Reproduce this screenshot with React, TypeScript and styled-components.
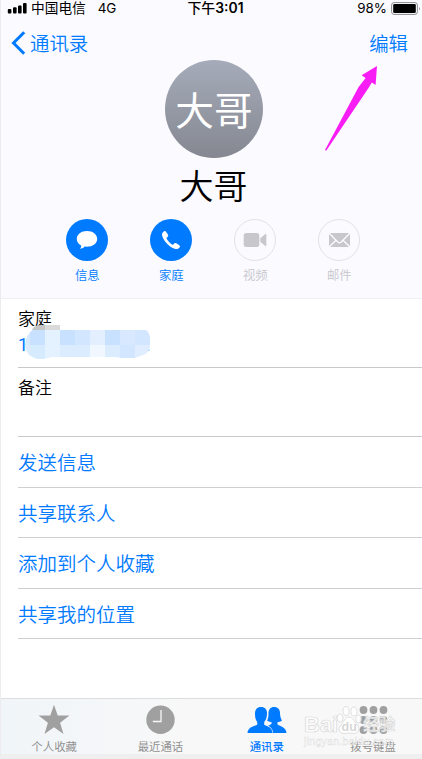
import React from 'react';
import styled, { createGlobalStyle } from 'styled-components';

const BLUE = '#007aff';

const GlobalStyle = createGlobalStyle`
  * { box-sizing: border-box; }
  body {
    margin: 0;
    background: #efeff0;
    font-family: "Liberation Sans", "Noto Sans CJK SC", sans-serif;
    color: #000;
    overflow: hidden;
  }
  svg { display: block; flex: none; }
`;

const Screen = styled.div`
  position: relative;
  width: 422px;
  height: 759px;
  border-left: 1px solid #ececee;
  border-bottom: 5px solid #efeff0;
  background: #fff;
  display: flex;
  flex-direction: column;
  overflow: hidden;
`;

const Header = styled.header`
  height: 299px;
  flex: none;
  background: #fafaff;
  border-bottom: 1px solid #f0f0f4;
  display: flex;
  flex-direction: column;
`;

const StatusBar = styled.div`
  display: grid;
  grid-template-columns: 1fr auto 1fr;
  align-items: center;
  height: 15px;
  padding: 0 1px 0 6px;
  font: 14px/16px Inter, "Noto Sans CJK SC", sans-serif;
  white-space: nowrap;
`;

const Carrier = styled.div`
  display: flex;
  align-items: center;
  font-size: 13.7px;
  gap: 4px;
`;

const Network = styled.span`
  margin-left: 8px;
  font-size: 13.5px;
  letter-spacing: -0.2px;
`;

const Clock = styled.div`
  font-weight: 600;
  font-size: 13.9px;
  margin-left: 3px;
  & > span { font-weight: 500; }
`;

const Power = styled.div`
  display: flex;
  align-items: center;
  justify-content: flex-end;
  gap: 4px;
  font-size: 13.4px;
`;

const NavBar = styled.nav`
  display: flex;
  align-items: center;
  justify-content: space-between;
  height: 44px;
  padding: 12px 14px 0 10px;
  color: ${BLUE};
  font: 350 19.4px/30px "Noto Sans CJK SC", sans-serif;
`;

const Back = styled.div`
  display: flex;
  align-items: center;
  gap: 4px;
`;

const Avatar = styled.div`
  width: 98px;
  height: 98px;
  margin: 1px 0 0 164px;
  border-radius: 50%;
  background: linear-gradient(#a5abb9, #858891);
  color: #fff;
  font: 400 38.7px/96px "Noto Sans CJK SC", sans-serif;
  text-align: center;
`;

const Name = styled.h1`
  margin: 4px 0 0 4px;
  height: 57px;
  text-align: center;
  font: 350 34px/46px "Noto Sans CJK SC", sans-serif;
`;

const Actions = styled.div`
  display: grid;
  grid-template-columns: repeat(4, 84px);
  margin-left: 44.3px;
`;

const Action = styled.div<{ $off?: boolean }>`
  display: flex;
  flex-direction: column;
  align-items: center;
  color: ${(p) => (p.$off ? '#c7c7cc' : BLUE)};
  font: 350 12.4px/18px "Noto Sans CJK SC", sans-serif;
  gap: 5px;
`;

const Disc = styled.div<{ $off?: boolean }>`
  width: 42px;
  height: 42px;
  border-radius: 50%;
  display: grid;
  place-items: center;
  background: ${(p) => (p.$off ? 'transparent' : BLUE)};
  border: ${(p) => (p.$off ? '1px solid #e2e2e7' : 'none')};
`;

const List = styled.main`
  flex: 1;
  padding-left: 17px;
`;

const Field = styled.section<{ $h: number }>`
  position: relative;
  height: ${(p) => p.$h}px;
  padding-top: 6px;
  border-bottom: 1px solid #c8c7cc;
  font: 350 17px/25px "Noto Sans CJK SC", sans-serif;
`;

const Phone = styled.div`
  display: flex;
  justify-content: space-between;
  width: 132.5px;
  color: ${BLUE};
  font: 18px/29px Roboto, sans-serif;
`;

const Mosaic = styled.svg`
  position: absolute;
  left: 7px;
  top: 26px;
`;

const LinkRow = styled.div<{ $h: number }>`
  height: ${(p) => p.$h}px;
  border-bottom: 1px solid #cfced2;
  color: ${BLUE};
  font: 350 19.5px/50px "Noto Sans CJK SC", sans-serif;
`;

const TabBar = styled.footer`
  height: 56px;
  flex: none;
  display: grid;
  grid-template-columns: repeat(4, 106.3px);
  border-top: 1px solid #dcdddf;
  background: linear-gradient(90deg, #f0f5f9, #f8f8f8 45%);
`;

const Tab = styled.div<{ $active?: boolean }>`
  display: flex;
  flex-direction: column;
  align-items: center;
  padding-top: 5px;
  color: ${(p) => (p.$active ? BLUE : '#929292')};
  font: ${(p) => (p.$active ? 500 : 400)} 11.4px/16px "Noto Sans CJK SC", sans-serif;
  gap: 2px;
`;

const Arrow = styled.svg`
  position: absolute;
  left: 322px;
  top: 64px;
`;

const Watermark = styled.div`
  position: absolute;
  left: 303px;
  top: 703px;
  width: 100px;
  color: rgba(255, 255, 255, 0.8);
  font: bold 22px/24px "Liberation Sans", "Noto Sans CJK SC", sans-serif;
  -webkit-text-stroke: 0.7px #d8d8d8;
  white-space: nowrap;
`;

const MarkRow = styled.div`
  display: flex;
  align-items: center;
  height: 33px;
`;

const Brand = styled.span`
  padding-top: 11px;
`;

const Paw = styled.svg`
  margin-left: -3px;
`;

const MarkCjk = styled.span`
  padding-top: 11px;
  font-size: 16px;
  width: 34px;
`;

const Site = styled.div`
  font: 10.5px/12px "Liberation Sans", sans-serif;
  letter-spacing: 0.3px;
  margin-top: -1px;
  -webkit-text-stroke: 0.4px #dcdcdc;
`;

const cells: [number, number, string][] = [
  [0, 5, '#d5e9ff'], [5, 5, '#c8e1ff'], [20, 5, '#e4f1ff'], [35, 5, '#c8e1ff'],
  [50, 5, '#d3e6ff'], [65, 5, '#e3efff'], [80, 5, '#c8e1ff'], [95, 5, '#d8e9ff'],
  [110, 5, '#d3e6ff'], [0, 20, '#dbecff'], [5, 20, '#d7ebff'], [20, 20, '#e4f1ff'],
  [35, 20, '#dbecff'], [50, 20, '#dbecff'], [65, 20, '#f1f7ff'], [80, 20, '#dbecff'],
  [95, 20, '#d3e6ff'], [110, 20, '#dfedff'],
];

const links: [string, number][] = [
  ['发送信息', 51],
  ['共享联系人', 50],
  ['添加到个人收藏', 51],
  ['共享我的位置', 50],
];

export default function App() {
  return (
    <>
      <GlobalStyle />
      <Screen>
        <Header>
          <StatusBar>
            <Carrier>
              <svg width="20" height="12" viewBox="0 0 20 12">
                <rect x="0.8" y="7" width="3.6" height="4.5" rx="1" />
                <rect x="6" y="5.3" width="3.6" height="6.2" rx="1" />
                <rect x="11" y="3.4" width="3.6" height="8.1" rx="1" />
                <rect x="16" y="1" width="3.6" height="10.5" rx="1" />
              </svg>
              <span>中国电信</span>
              <Network>4G</Network>
            </Carrier>
            <Clock><span>下午</span>3:01</Clock>
            <Power>
              98%
              <svg width="30" height="13" viewBox="0 0 30 13">
                <rect x="0.6" y="0.6" width="25.8" height="11.8" rx="2.5" fill="none" stroke="#8b8b8e" />
                <rect x="2.2" y="2" width="22.6" height="9" rx="1.3" />
                <path d="M28 4.5q1.5 2 0 4z" fill="#8b8b8e" />
              </svg>
            </Power>
          </StatusBar>
          <NavBar>
            <Back>
              <svg width="15" height="24" viewBox="0 0 15 24" fill="none" stroke={BLUE} strokeWidth="3">
                <path d="M13.2 1.2L2.5 12l10.7 10.8" />
              </svg>
              通讯录
            </Back>
            <span>编辑</span>
          </NavBar>
          <Avatar>大哥</Avatar>
          <Name>大哥</Name>
          <Actions>
            <Action>
              <Disc>
                <svg width="22" height="20" viewBox="0 0 22 20" fill="#fff">
                  <path d="M11 1C5.2 1 .8 4.5.8 9c0 2.800 1.700 5.100 4.300 6.500.2 1.300-.2 2.300-1 3.200 2 0 3.500-.8 4.600-2.100 7 .8 12.500-2.600 12.500-7.600C21.200 4.500 16.800 1 11 1z" />
                </svg>
              </Disc>
              信息
            </Action>
            <Action>
              <Disc>
                <svg width="20" height="20" viewBox="0 0 20 20" fill="#fff">
                  <path d="M2.800 1.400C1 2.700.6 4.300 1.400 6.500 3.400 12 8.500 17 13.700 18.800c2.200.7 3.900.2 5-1.500.5-.8.3-1.500-.4-2l-3-2c-.8-.5-1.600-.4-2.200.3l-.7.8c-.4.4-.8.400-1.300.1C9 13.100 7 11 5.700 8.700c-.3-.5-.2-.9.200-1.300l.8-.7c.6-.6.7-1.300.2-2.100L5 1.700C4.400.900 3.600.800 2.800 1.400z" />
                </svg>
              </Disc>
              家庭
            </Action>
            <Action $off>
              <Disc $off>
                <svg width="24" height="14" viewBox="0 0 24 14" fill="#c7c7cc">
                  <rect x="0.700" width="15.600" height="14" rx="2.800" />
                  <path d="M17.300 5.200L22.300 1q1-.5 1 .5v11q0 1-1 .5l-5-4.200z" />
                </svg>
              </Disc>
              视频
            </Action>
            <Action $off>
              <Disc $off>
                <svg width="21" height="14" viewBox="0 0 21 14" fill="#c7c7cc">
                  <rect width="21" height="14" />
                  <path d="M0 0l8.800 9q1.700 1.500 3.400 0L21 0M0 14l7.300-7M21 14l-7.300-7" fill="none" stroke="#fafaff" strokeWidth="1.400" />
                </svg>
              </Disc>
              邮件
            </Action>
          </Actions>
        </Header>
        <List>
          <Field $h={69}>
            家庭
            <Phone><span>1</span><span>.</span></Phone>
            <Mosaic width="126" height="34" viewBox="0 0 126 34">
              <path d="M7 5Q9 0 16 0H35V5z" fill="#c6c6c6" />
              <path d="M20 0H35V5H20z" fill="#dadada" />
              <clipPath id="smudge">
                <path d="M8 5H121q4 3 4 9v8q-1 6-7 8l-8 3H96l-6-1H27l-8 2h-7l-8-4q-4-5-4-11 1-10 8-14z" />
              </clipPath>
              <g clipPath="url(#smudge)">
                {cells.map(([x, y, fill]) => (
                  <rect key={`${x}-${y}`} x={x} y={y} width="15" height="15" fill={fill} />
                ))}
              </g>
            </Mosaic>
          </Field>
          <Field $h={69}>备注</Field>
          {links.map(([label, h]) => (
            <LinkRow key={label} $h={h}>{label}</LinkRow>
          ))}
        </List>
        <TabBar>
          <Tab>
            <svg width="32" height="32" viewBox="0 0 32 32" fill="#a0a0a0">
              <path d="M16 .8l3.700 10.800H31.500l-9.400 7.100 3.400 11.200L16 23.200l-9.500 6.700 3.400-11.200L.5 11.600h11.800z" />
            </svg>
            个人收藏
          </Tab>
          <Tab>
            <svg width="32" height="32" viewBox="0 0 32 32">
              <circle cx="16.500" cy="15.800" r="14.200" fill="#a0a0a0" />
              <path d="M17 6v11.500H8.800" fill="none" stroke="#f5f7f9" strokeWidth="1.300" />
            </svg>
            最近通话
          </Tab>
          <Tab $active>
            <svg width="40" height="32" viewBox="0 0 40 32" fill={BLUE}>
              <path d="M27 3c4 0 6 2.600 6 6.500 0 2.500 1 5.500 2 7-1.400 1-3 1.500-4.500 1.500v2.500c3 2 8.500 2.700 9 8.500H20l-1-6 5.500-3V18c-1.500 0-3-.5-4.500-1.500 1.200-1.500 1.500-4.500 1.500-7C21.500 5.600 23.500 3 27 3z" />
              <path d="M14 3c4 0 6 2.600 6 6.500 0 3.500-.8 6.500-2.800 8.500v2.700c4 2 8 2.600 8.400 8.300H.5c.5-5.700 5-6.300 9.700-8.300V18C8.500 16 8 13 8 9.500 8 5.600 10 3 14 3z" stroke="#f8f8f8" strokeWidth="1.200" paintOrder="stroke" />
            </svg>
            通讯录
          </Tab>
          <Tab>
            <svg width="32" height="32" viewBox="0 0 32 32" fill="#a0a0a0">
              {[6, 16, 26].map((y) =>
                [6, 16, 26].map((x) => <circle key={`${x}-${y}`} cx={x + 0.5} cy={y} r="3.900" />),
              )}
            </svg>
            拨号键盘
          </Tab>
        </TabBar>
        <Arrow width="56" height="90" viewBox="0 0 56 90">
          <path d="M54 2L38.600 11.300l4 2.700-7 9L2 86l1.200.7L45.500 24l3.300-5.500 3.800 2.500z" fill="#f91df5" />
        </Arrow>
        <Watermark>
          <MarkRow>
            <Brand>Bai</Brand>
            <Paw width="28" height="30" viewBox="0 0 26 30" fill="#fff" fillOpacity="0.85" stroke="#d8d8d8" strokeWidth="0.800">
              <ellipse cx="4" cy="13" rx="3" ry="4" />
              <ellipse cx="10" cy="6" rx="3" ry="4.500" />
              <ellipse cx="18" cy="6.500" rx="3" ry="4.500" />
              <ellipse cx="22.500" cy="14" rx="2.800" ry="4" />
              <path d="M13 12c4 0 5 5 8.500 8 3 4 1 9-4 8.500-3-.5-6-.5-9 0-5 .5-7-4-4-8C8 17 9 12 13 12z" />
              <text x="5.500" y="26" fontSize="12.500" fontWeight="bold" fill="#d0d0d0" stroke="none">du</text>
            </Paw>
            <MarkCjk>经验</MarkCjk>
          </MarkRow>
          <Site>jingyan.baidu.com</Site>
        </Watermark>
      </Screen>
    </>
  );
}
